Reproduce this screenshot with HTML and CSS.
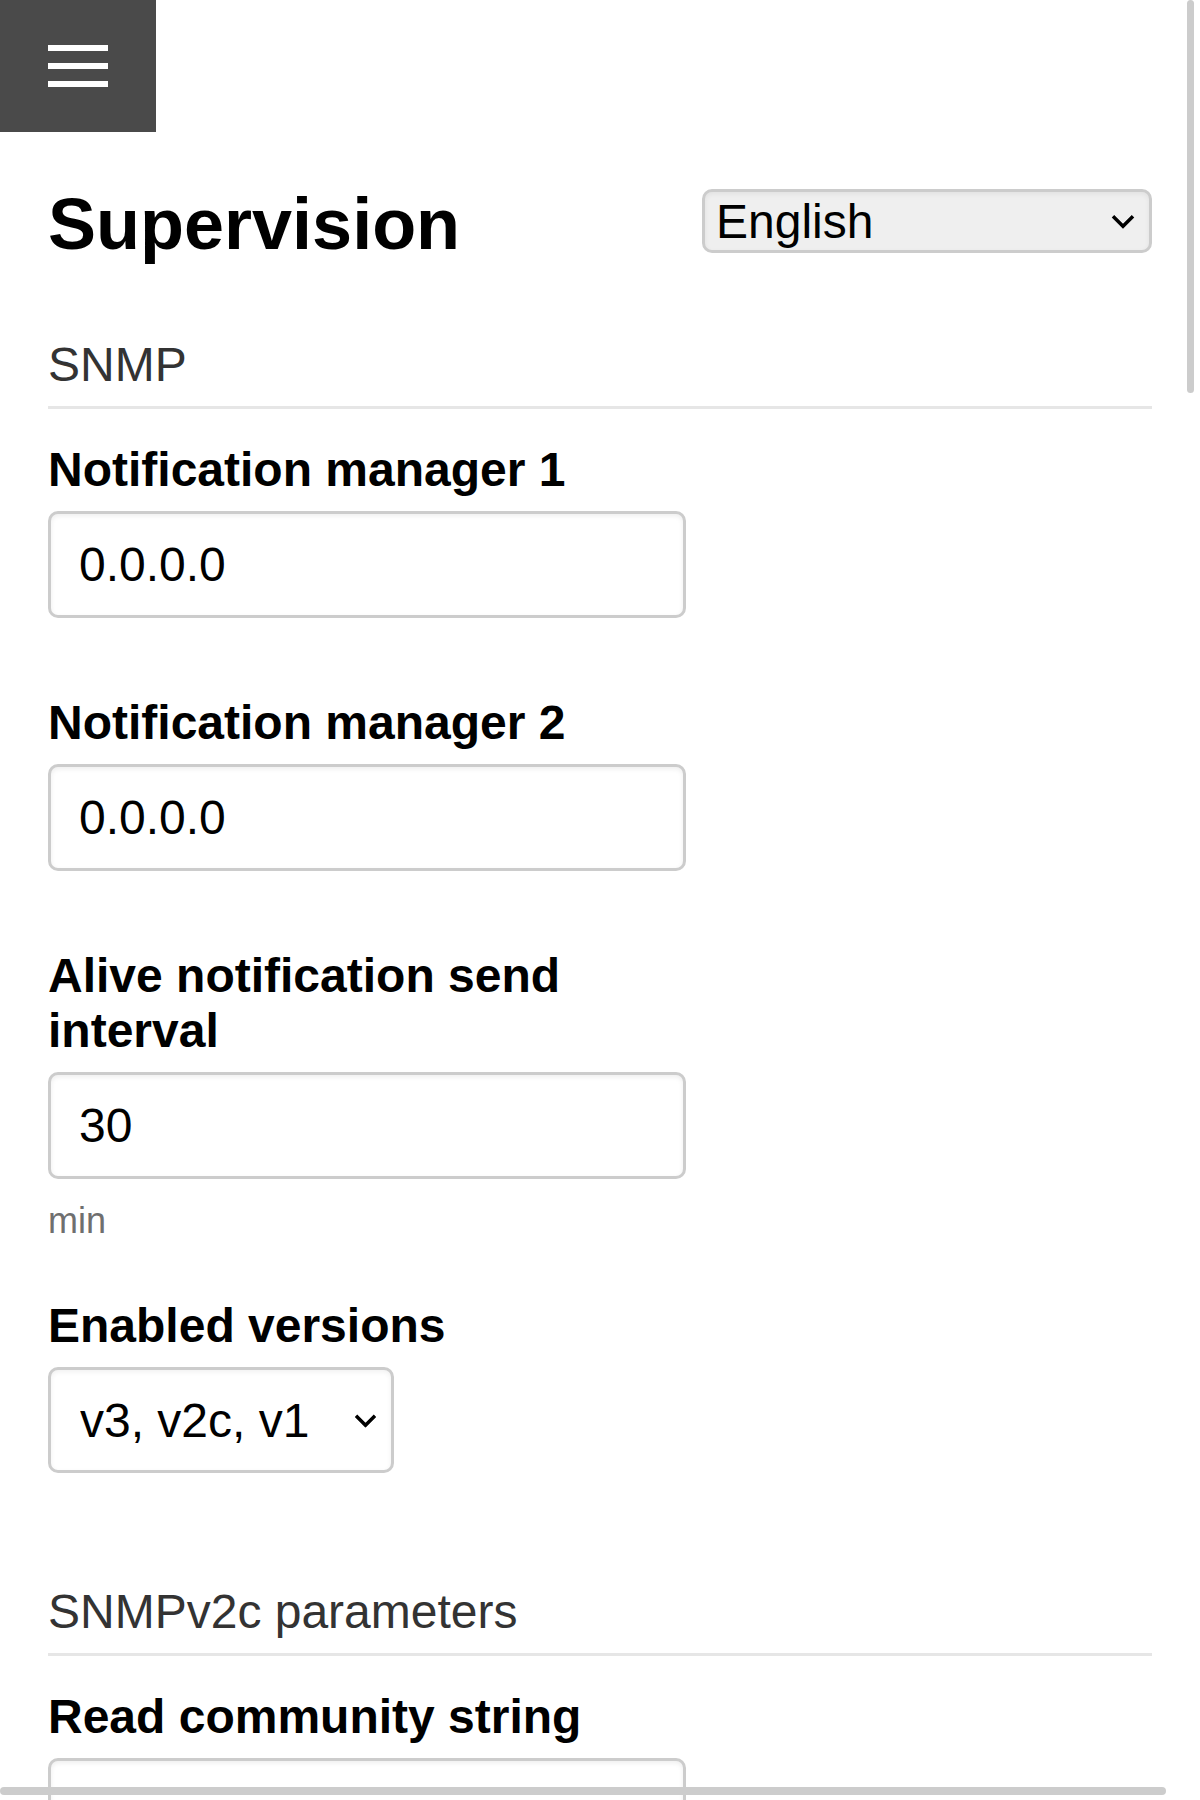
FILE: index.html
```html
<!DOCTYPE html>
<html lang="en">
<head>
    <meta charset="UTF-8">
    <meta name="viewport" content="width=device-width, initial-scale=1.0">
    <title>Supervision</title>
    <link rel="stylesheet" href="styles.css">
</head>
<body>
    <header class="topbar">
        <button class="menu-btn" aria-label="Menu">
            <span></span>
            <span></span>
            <span></span>
        </button>
    </header>

    <main class="page">
        <div class="title-row">
            <h1 class="page-title">Supervision</h1>
            <div class="select-wrap lang-select">
                <select>
                    <option>English</option>
                    <option>Français</option>
                    <option>Deutsch</option>
                </select>
                <svg class="chevron" width="24" height="15" viewBox="0 0 24 15">
                    <polyline points="2,2 12,12 22,2" fill="none" stroke="#000" stroke-width="3.5"/>
                </svg>
            </div>
        </div>

        <section class="section">
            <h2 class="section-title">SNMP</h2>

            <div class="field">
                <label class="field-label" for="mgr1">Notification manager 1</label>
                <input class="text-input" id="mgr1" type="text" value="0.0.0.0">
            </div>

            <div class="field">
                <label class="field-label" for="mgr2">Notification manager 2</label>
                <input class="text-input" id="mgr2" type="text" value="0.0.0.0">
            </div>

            <div class="field">
                <label class="field-label" for="alive">Alive notification send interval</label>
                <input class="text-input" id="alive" type="text" value="30">
                <div class="field-help">min</div>
            </div>

            <div class="field after-help">
                <label class="field-label" for="versions">Enabled versions</label>
                <div class="select-wrap version-select">
                    <select id="versions">
                        <option>v3, v2c, v1</option>
                        <option>v3</option>
                        <option>v3, v2c</option>
                    </select>
                    <svg class="chevron" width="23" height="14" viewBox="0 0 23 14">
                        <polyline points="2,2 11.5,11.5 21,2" fill="none" stroke="#000" stroke-width="3.5"/>
                    </svg>
                </div>
            </div>
        </section>

        <section class="section">
            <h2 class="section-title">SNMPv2c parameters</h2>

            <div class="field">
                <label class="field-label" for="readcom">Read community string</label>
                <input class="text-input" id="readcom" type="text" value="">
            </div>
        </section>
    </main>

    <!-- overlay scrollbars of the mobile viewport -->
    <div class="scrollbar-v"></div>
    <div class="scrollbar-h"></div>
</body>
</html>
```

FILE: styles.css
```css
* {
    margin: 0;
    padding: 0;
    box-sizing: border-box;
}

html, body {
    overflow: hidden;
}

body {
    font-family: "Liberation Sans", Arial, sans-serif;
    background: #fff;
    color: #000;
    height: 1800px;
    position: relative;
}

.topbar {
    height: 132px;
}

.menu-btn {
    width: 156px;
    height: 132px;
    background: #4a4a4a;
    border: none;
    display: flex;
    flex-direction: column;
    gap: 12px;
    padding: 45px 0 0 48px;
    cursor: pointer;
}

.menu-btn span {
    display: block;
    width: 60px;
    height: 6px;
    background: #fff;
}

.page {
    padding: 0 48px;
}

.title-row {
    margin-top: 50px;
    display: flex;
    justify-content: space-between;
    align-items: flex-start;
}

.page-title {
    font-size: 72px;
    line-height: 84px;
    font-weight: bold;
}

.select-wrap {
    position: relative;
}

.select-wrap select {
    appearance: none;
    -webkit-appearance: none;
    font-family: inherit;
    font-size: 48px;
    color: #000;
    border: 3px solid #ccc;
    border-radius: 10px;
    box-shadow: inset 0 2px 5px rgba(0,0,0,0.06);
    width: 100%;
    height: 100%;
    outline: none;
}

.select-wrap .chevron {
    position: absolute;
    right: 17px;
    top: 50%;
    transform: translateY(-45%);
    pointer-events: none;
}

.lang-select {
    margin-top: 7px;
    width: 450px;
    height: 64px;
}

.lang-select select {
    background: #efefef;
    padding: 0 50px 0 11px;
}

.version-select {
    width: 346px;
    height: 106px;
}

.version-select select {
    background: #fff;
    padding: 0 50px 0 29px;
}

.section {
    margin-top: 71px;
}

.section + .section {
    margin-top: 111px;
}

.section-title {
    font-size: 48px;
    line-height: 56px;
    font-weight: normal;
    color: #333;
    padding-bottom: 13px;
    border-bottom: 3px solid #e6e6e6;
    margin-bottom: 33px;
}

.field {
    max-width: 638px;
}

.field + .field {
    margin-top: 77px;
}

.field.after-help {
    margin-top: 55px;
}

.field-label {
    display: block;
    font-size: 48px;
    line-height: 55px;
    font-weight: bold;
    margin-bottom: 14px;
}

.text-input {
    display: block;
    width: 638px;
    height: 107px;
    font-family: inherit;
    font-size: 48px;
    color: #000;
    padding: 0 28px;
    border: 3px solid #ccc;
    border-radius: 10px;
    background: #fff;
    box-shadow: inset 0 2px 5px rgba(0,0,0,0.07);
    outline: none;
}

.field-help {
    margin-top: 20px;
    font-size: 36px;
    line-height: 44px;
    color: #6f6f6f;
}

.scrollbar-v {
    position: absolute;
    top: 0;
    left: 1187px;
    width: 7px;
    height: 393px;
    background: #ccc;
    border-radius: 4px;
}

.scrollbar-h {
    position: absolute;
    top: 1787px;
    left: 0;
    width: 1166px;
    height: 8px;
    background: #ccc;
    border-radius: 4px;
}
```
